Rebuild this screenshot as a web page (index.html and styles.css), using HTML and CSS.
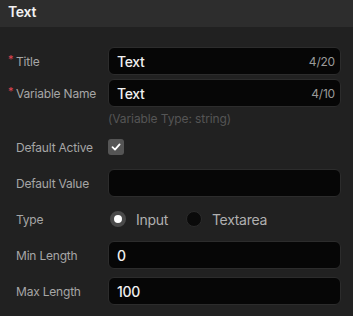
FILE: index.html
```html
<!DOCTYPE html>
<html>
<head>
<meta charset="utf-8">
<link rel="stylesheet" href="styles.css">
</head>
<body>
<div class="header">Text</div>
<div class="form">
  <div class="group">
    <div class="row">
      <label class="label"><span class="req">*</span>Title</label>
      <div class="input"><span class="val">Text</span><span class="count">4/20</span></div>
    </div>
    <div class="row">
      <label class="label"><span class="req">*</span>Variable Name</label>
      <div class="input"><span class="val">Text</span><span class="count">4/10</span></div>
    </div>
    <div class="hint">(Variable Type: string)</div>
  </div>
  <div class="row">
    <label class="label">Default Active</label>
    <div class="field">
      <span class="checkbox">
        <svg width="10" height="10" viewBox="0 0 10 10"><path d="M1.5 5.2 L4 7.6 L8.6 2.4" fill="none" stroke="#fff" stroke-width="1.8" stroke-linecap="round" stroke-linejoin="round"/></svg>
      </span>
    </div>
  </div>
  <div class="row">
    <label class="label">Default Value</label>
    <div class="input"></div>
  </div>
  <div class="row">
    <label class="label">Type</label>
    <div class="radios">
      <span class="radio on"></span><span class="rlabel">Input</span>
      <span class="radio"></span><span class="rlabel">Textarea</span>
    </div>
  </div>
  <div class="row">
    <label class="label">Min Length</label>
    <div class="input"><span class="val">0</span></div>
  </div>
  <div class="row">
    <label class="label">Max Length</label>
    <div class="input"><span class="val">100</span></div>
  </div>
</div>
</body>
</html>
```

FILE: styles.css
```css
html, body {
  margin: 0;
  padding: 0;
  background: #212121;
  font-family: Inter, "Noto Sans", sans-serif;
  color: #fff;
  width: 353px;
  height: 316px;
  overflow: hidden;
}
.header {
  height: 27px;
  background: #2d2d2d;
  padding: 0 8px;
  box-sizing: border-box;
  font-size: 14px;
  font-weight: 600;
  line-height: 24px;
  letter-spacing: -0.3px;
  color: #f2f2f2;
}
.form {
  display: flex;
  flex-direction: column;
  gap: 8px;
  padding: 20px 12px 0 8px;
}
.group {
  display: flex;
  flex-direction: column;
  gap: 4px;
}
.row {
  display: grid;
  grid-template-columns: 100px 1fr;
  align-items: center;
  min-height: 28px;
}
.label {
  display: flex;
  align-items: center;
  padding-left: 8px;
  font-size: 12px;
  color: #a6a6a6;
  letter-spacing: -0.2px;
  position: relative;
}
.req {
  position: absolute;
  left: 0;
  top: -2px;
  color: #e04552;
  font-size: 11px;
}
.input {
  height: 28px;
  box-sizing: border-box;
  background: #060606;
  border: 1px solid #2c2c2c;
  border-radius: 6px;
  display: flex;
  align-items: center;
  justify-content: space-between;
  padding: 0 5px 0 8px;
}
.val {
  font-size: 14px;
  font-weight: 500;
  color: #f0f0f0;
  letter-spacing: -0.3px;
}
.count {
  font-size: 12px;
  color: #9a9a9a;
  letter-spacing: -0.2px;
}
.hint {
  padding-left: 100px;
  font-size: 12px;
  line-height: 14px;
  margin-top: 1px;
  margin-bottom: -1px;
  color: #555;
  letter-spacing: -0.1px;
}
.field {
  display: flex;
  align-items: center;
}
.checkbox {
  width: 16px;
  height: 16px;
  border-radius: 3px;
  background: #555;
  display: flex;
  align-items: center;
  justify-content: center;
}
.radios {
  display: flex;
  align-items: center;
  padding-left: 2px;
}
.radio {
  width: 16px;
  height: 16px;
  border-radius: 50%;
  box-sizing: border-box;
  background: #0a0a0a;
  border: 1px solid #2a2a2a;
}
.radio.on {
  background: #fff;
  border: 4px solid #4a4a4a;
}
.rlabel {
  font-size: 14px;
  color: #b0b0b0;
  margin-left: 10px;
  margin-right: 18px;
  letter-spacing: -0.3px;
}
```
